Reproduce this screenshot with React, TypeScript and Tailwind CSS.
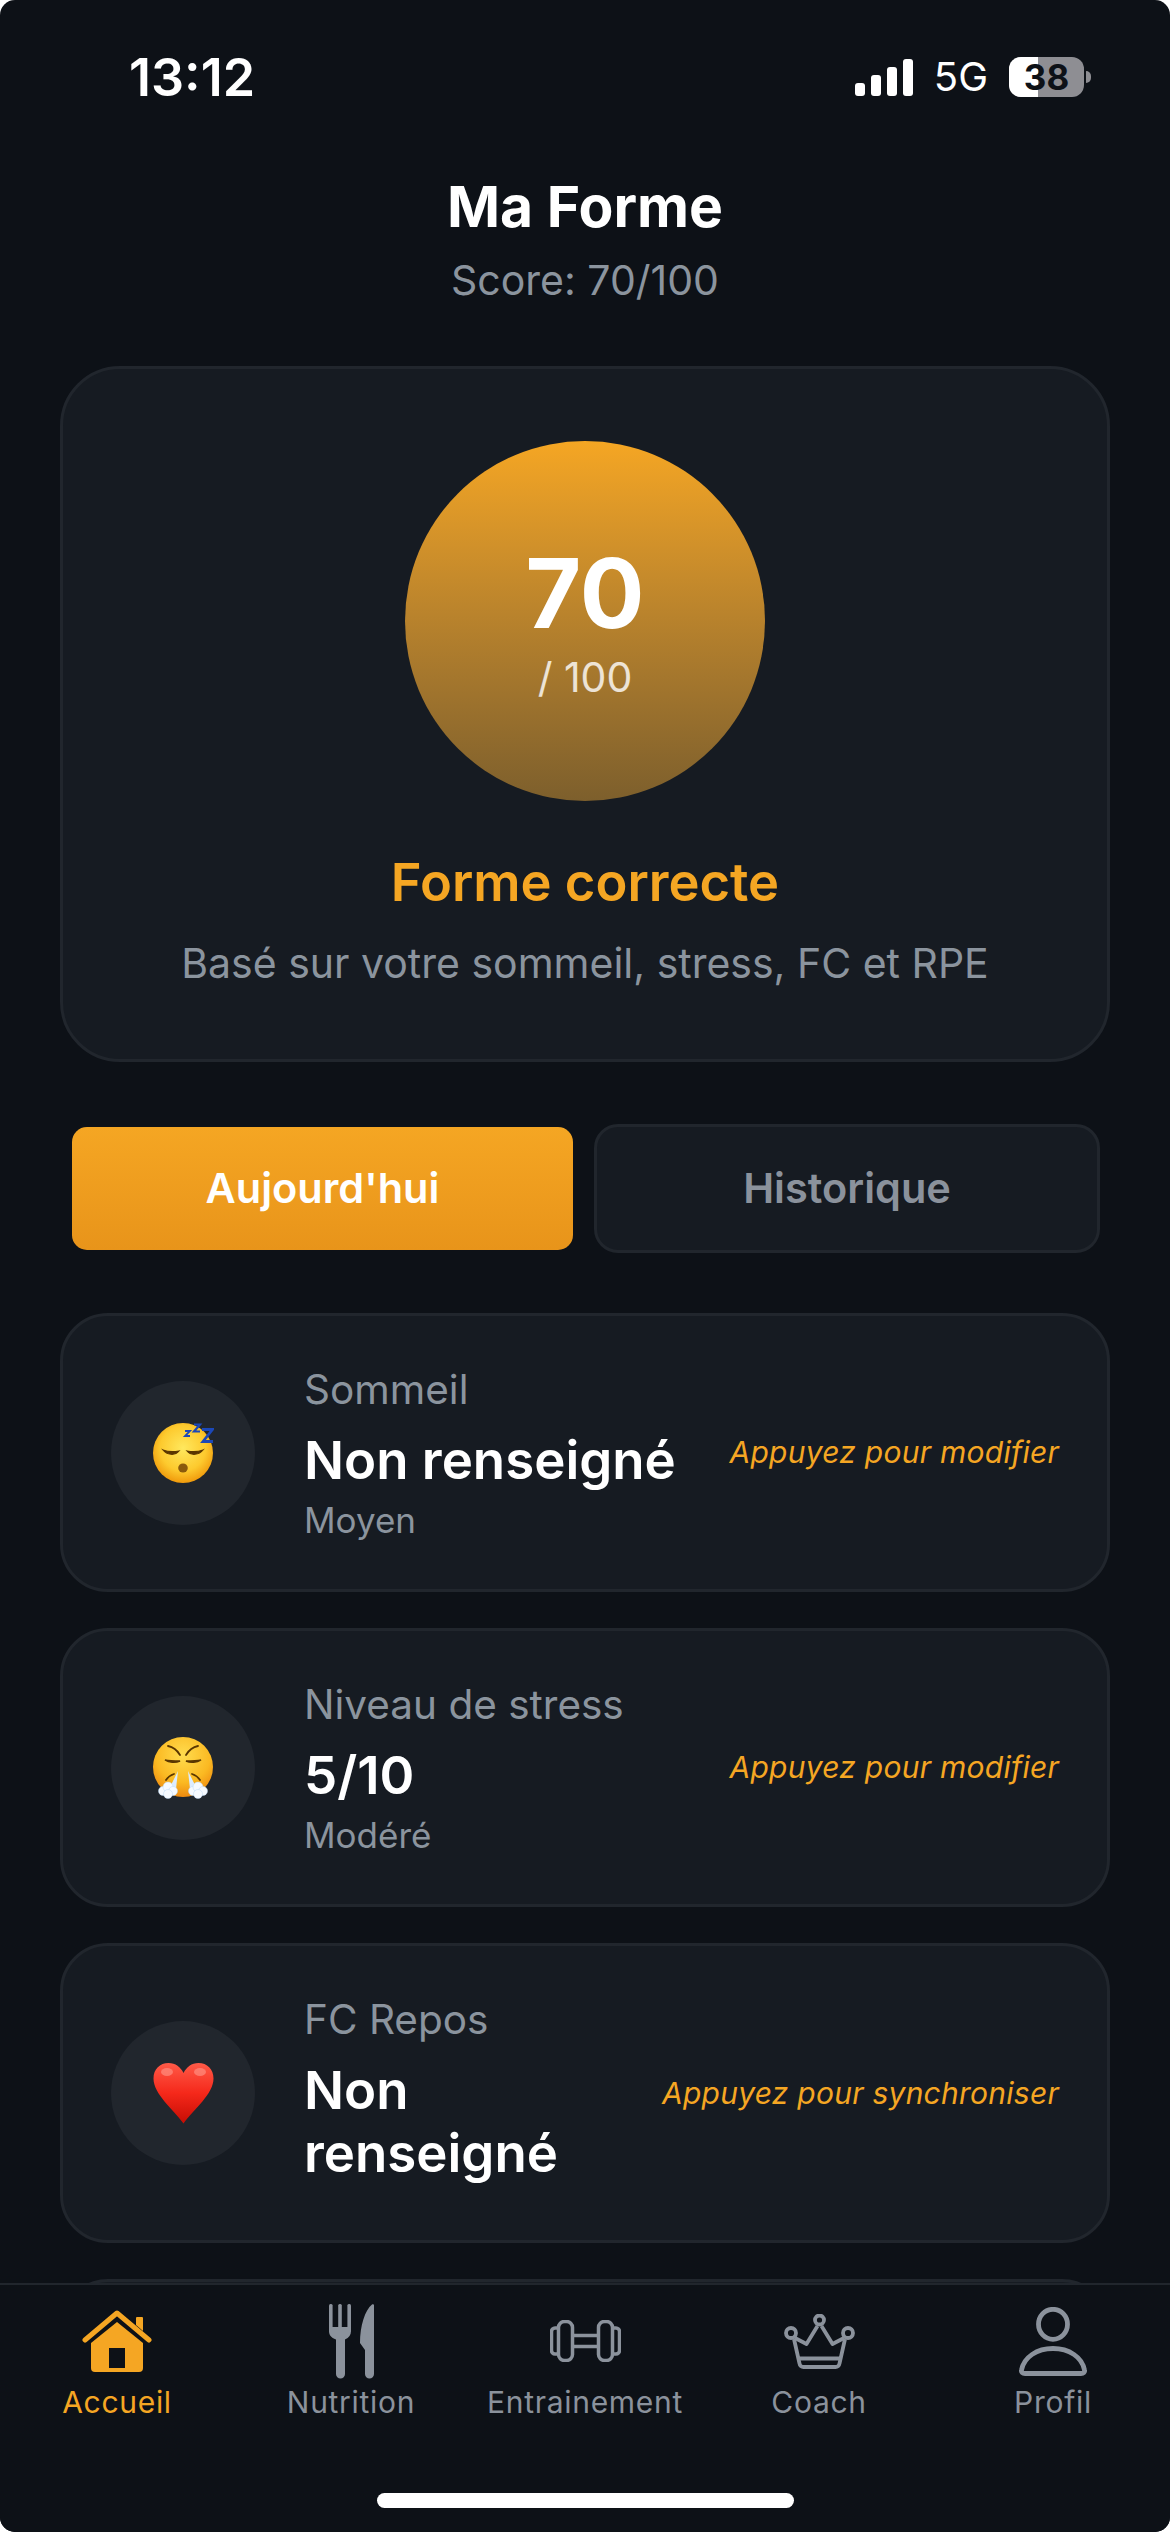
import React from 'react';

const font = { fontFamily: 'Inter, "Liberation Sans", sans-serif' };

function SleepFace() {
  return (
    <svg width="61" height="60" viewBox="0 0 61 60">
      <defs>
        <radialGradient id="sleepFill" cx="50%" cy="42%" r="58%">
          <stop offset="0%" stopColor="#ffe85e" />
          <stop offset="65%" stopColor="#fdca2e" />
          <stop offset="100%" stopColor="#f09a0c" />
        </radialGradient>
      </defs>
      <circle cx="30" cy="30" r="30" fill="url(#sleepFill)" />
      <path d="M10 27c4 5 12 6 16 1-5 1-11 1-16-1z" fill="#5a3600" stroke="#5a3600" strokeWidth="1.200" />
      <path d="M34 28c4 5 12 4 16-1-5 2-11 2-16 1z" fill="#5a3600" stroke="#5a3600" strokeWidth="1.200" />
      <ellipse cx="30" cy="45" rx="4.800" ry="4.500" fill="#8a5a0c" />
      <path d="M32 8h5l-5 5h5" fill="none" stroke="#1c48b8" strokeWidth="1.800" />
      <path d="M41 1.500h6l-6 7h6" fill="none" stroke="#1c48b8" strokeWidth="2.200" />
      <path d="M49 6.500h10.500l-9.500 12h10" fill="none" stroke="#1c48b8" strokeWidth="2.800" />
    </svg>
  );
}

function SteamFace() {
  return (
    <svg width="60" height="62" viewBox="0 0 60 62">
      <defs>
        <radialGradient id="steamFill" cx="50%" cy="30%" r="70%">
          <stop offset="0%" stopColor="#ffdc4e" />
          <stop offset="65%" stopColor="#fbb922" />
          <stop offset="100%" stopColor="#ee8a10" />
        </radialGradient>
      </defs>
      <circle cx="30" cy="30" r="30" fill="url(#steamFill)" />
      <path d="M15 9c5 1 9 4 12 9M45 9c-5 1-9 4-12 9" fill="none" stroke="#5a3600" strokeWidth="1.800" strokeLinecap="round" />
      <path d="M12 23c4 3 11 3 15 1-5 0-10 0-15-1zM33 24c4 2 11 2 15-1-5 1-10 1-15 1z" fill="#5a3600" stroke="#5a3600" strokeWidth="1.400" />
      <path d="M13 43c2-3 5-5 8-6M47 43c-2-3-5-5-8-6" fill="none" stroke="#5a3600" strokeWidth="1.800" strokeLinecap="round" />
      <path d="M25 34l-8 16 6 2zM35 34l8 16-6 2z" fill="#dcecff" />
      <g fill="#f6faff" stroke="#bcd8f5" strokeWidth="0.500">
        <circle cx="10" cy="54" r="4.500" />
        <circle cx="15" cy="50" r="5" />
        <circle cx="20" cy="54" r="4.500" />
        <circle cx="15" cy="57" r="4.500" />
        <circle cx="40" cy="54" r="4.500" />
        <circle cx="45" cy="50" r="5" />
        <circle cx="50" cy="54" r="4.500" />
        <circle cx="45" cy="57" r="4.500" />
      </g>
    </svg>
  );
}

function HeartIcon() {
  return (
    <svg width="61" height="61" viewBox="0 0 61 61">
      <defs>
        <linearGradient id="heartFill" x1="0" y1="0" x2="0" y2="1">
          <stop offset="0%" stopColor="#ff5a48" />
          <stop offset="50%" stopColor="#f5281a" />
          <stop offset="100%" stopColor="#c60d04" />
        </linearGradient>
      </defs>
      <path d="M30.500 60.500C20 46 0.500 31 0.500 15.500 0.500 6 7 0 15.500 0c7 0 12 4 15 10 3-6 8-10 15-10C54 0 60.500 6 60.500 15.500 60.500 31 41 46 30.500 60.500z" fill="url(#heartFill)" />
      <ellipse cx="14" cy="9" rx="6" ry="4" fill="#ff9a8c" opacity="0.6" />
      <ellipse cx="47" cy="9" rx="6" ry="4" fill="#ff9a8c" opacity="0.6" />
    </svg>
  );
}

function HomeIcon() {
  return (
    <svg width="70" height="63" viewBox="0 0 70 63">
      <path d="M9 33L35 12l26 21v25a4 4 0 0 1-4 4H13a4 4 0 0 1-4-4z" fill="#f5a623" />
      <rect x="27" y="38" width="16" height="20" fill="#0d1117" />
      <path d="M3 30L35 3l32 27" fill="none" stroke="#f5a623" strokeWidth="5" strokeLinecap="round" strokeLinejoin="round" />
      <path d="M54 8a1 1 0 0 1 1-1h5a1 1 0 0 1 1 1v13l-7-6z" fill="#f5a623" />
    </svg>
  );
}

function ForkKnifeIcon() {
  return (
    <svg width="45" height="75" viewBox="0 0 45 75" fill="#8b929c">
      <rect x="0" y="0" width="3.600" height="28" rx="1.500" />
      <rect x="9.200" y="0" width="3.600" height="28" rx="1.500" />
      <rect x="18.400" y="0" width="3.600" height="28" rx="1.500" />
      <path d="M0 23h22v4c0 4-2 6.500-6 8.500V70a4.500 4.500 0 0 1-9 0V35.500C2 33.500 0 31 0 27z" />
      <path d="M45 1.500V70a4.500 4.500 0 0 1-9 0V46l-5-7C31 22 36 6 43 0.500 44 -0.200 45 0.300 45 1.500z" />
    </svg>
  );
}

function DumbbellIcon() {
  return (
    <svg width="71" height="42" viewBox="0 0 71 42" fill="none" stroke="#8b929c" strokeWidth="3.500">
      <path d="M8.500 8H5a3.500 3.500 0 0 0-3.500 3.500v19A3.500 3.500 0 0 0 5 34h3.500" />
      <rect x="8.500" y="1.500" width="14" height="39" rx="6" />
      <rect x="48.500" y="1.500" width="14" height="39" rx="6" />
      <path d="M62.500 8H66a3.500 3.500 0 0 1 3.500 3.500v19A3.500 3.500 0 0 1 66 34h-3.500" />
      <path d="M22.500 15.500h26M22.500 26.500h26" />
    </svg>
  );
}

function CrownIcon() {
  return (
    <svg width="71" height="55" viewBox="0 0 71 55" fill="none" stroke="#8b929c" strokeWidth="3.800" strokeLinejoin="round">
      <circle cx="35.500" cy="6" r="4.500" />
      <circle cx="7" cy="19" r="5" />
      <circle cx="64" cy="19" r="5" />
      <path d="M11 24l11.500 6 11-18M60 24l-11.500 6-11-18" />
      <path d="M10 25l5.500 24.500a4 4 0 0 0 4 3.500h32a4 4 0 0 0 4-3.500L61 25" />
      <path d="M14 44.500h43" />
    </svg>
  );
}

function PersonIcon() {
  return (
    <svg width="68" height="69" viewBox="0 0 68 69" fill="none" stroke="#8b929c" strokeWidth="4.800">
      <ellipse cx="34" cy="17.300" rx="14.500" ry="15" />
      <path d="M6 66.500C3.500 66.500 2 65 2.500 63 5 50 18 41.500 34 41.500s29 8.500 31.500 21.500c.5 2-1 3.500-3.500 3.500z" />
    </svg>
  );
}

type Metric = {
  icon: React.ReactNode;
  label: string;
  value: string;
  note?: string;
  hint: string;
  height: string;
};

const metrics: Metric[] = [
  { icon: <SleepFace />, label: 'Sommeil', value: 'Non renseigné', note: 'Moyen', hint: 'Appuyez pour modifier', height: 'h-[279px]' },
  { icon: <SteamFace />, label: 'Niveau de stress', value: '5/10', note: 'Modéré', hint: 'Appuyez pour modifier', height: 'h-[279px]' },
  { icon: <HeartIcon />, label: 'FC Repos', value: 'Non renseigné', hint: 'Appuyez pour synchroniser', height: 'h-[300px]' },
  { icon: null, label: '', value: '', hint: '', height: 'h-[279px]' },
];

function MetricCard({ metric }: { metric: Metric }) {
  return (
    <div className={`${metric.height} shrink-0 flex items-center rounded-[48px] border-[3px] border-[#21262d] bg-[#161b22] px-[48px]`}>
      {metric.icon && (
        <>
          <div className="w-[144px] h-[144px] shrink-0 rounded-full bg-[#21262d] flex items-center justify-center">
            {metric.icon}
          </div>
          <div className={`ml-[49px] flex-1 min-w-0 ${metric.note ? 'pt-[2px]' : 'pb-[9px]'}`}>
            <div className="text-[40.500px] leading-[54px] text-[#8b949e]">{metric.label}</div>
            <div className={`text-[52.800px] leading-[63px] font-semibold text-white ${metric.note ? 'mt-[12px]' : 'mt-[12px]'}`}>{metric.value}</div>
            {metric.note && <div className="text-[35px] leading-[48px] text-[#8b949e] mt-[4px]">{metric.note}</div>}
          </div>
          <div className="shrink-0 text-[30px] italic text-[#f5a623] tracking-[0.25px]">{metric.hint}</div>
        </>
      )}
    </div>
  );
}

type Tab = { label: string; icon: React.ReactNode; active?: boolean };

const tabs: Tab[] = [
  { label: 'Accueil', icon: <HomeIcon />, active: true },
  { label: 'Nutrition', icon: <ForkKnifeIcon /> },
  { label: 'Entrainement', icon: <DumbbellIcon /> },
  { label: 'Coach', icon: <CrownIcon /> },
  { label: 'Profil', icon: <PersonIcon /> },
];

export default function App() {
  return (
    <div className="relative w-[1170px] h-[2532px] overflow-hidden bg-[#0d1117] rounded-[15px] flex flex-col" style={font}>
      {/* status bar */}
      <div className="h-[150px] shrink-0 flex items-start justify-between pl-[129px] pr-[79px] pt-[48px]">
        <span className="text-[52px] leading-[60px] font-semibold text-white">13:12</span>
        <div className="flex items-end mt-[9px] h-[40px]">
          <div className="flex items-end gap-[6px] mb-[1px]">
            <div className="w-[10px] h-[13px] rounded-[3px] bg-white" />
            <div className="w-[10px] h-[21px] rounded-[3px] bg-white" />
            <div className="w-[10px] h-[29px] rounded-[3px] bg-white" />
            <div className="w-[10px] h-[37px] rounded-[3px] bg-white" />
          </div>
          <span className="ml-[21px] text-[40px] leading-[40px] text-white">5G</span>
          <div className="ml-[21px] flex items-center">
            <div className="relative w-[75px] h-[40px] rounded-[12px] overflow-hidden bg-[#8e8e93] flex items-center justify-center">
              <div className="absolute left-0 top-0 bottom-0 w-[29px] bg-white" />
              <span className="relative text-[35px] leading-[36px] font-bold text-[#0d1117]">38</span>
            </div>
            <div className="ml-[2px] w-[5px] h-[12px] rounded-r-full bg-[#8e8e93]" />
          </div>
        </div>
      </div>

      {/* header */}
      <div className="shrink-0 flex flex-col items-center">
        <h1 className="mt-[21px] text-[57px] leading-[72px] font-bold text-white">Ma Forme</h1>
        <p className="mt-[12px] text-[41px] leading-[51px] text-[#8b949e]">Score: 70/100</p>
      </div>

      {/* score card */}
      <div className="mx-[60px] mt-[60px] h-[696px] shrink-0 rounded-[60px] border-[3px] border-[#21262d] bg-[#161b22] flex flex-col items-center pt-[72px]">
        <div className="w-[360px] h-[360px] rounded-full bg-gradient-to-b from-[#f5a623] to-[#7d5f2c] flex flex-col items-center justify-center pt-[2px]">
          <span className="text-[96px] leading-[105px] font-bold text-white">70</span>
          <span className="mt-[6px] text-[41px] leading-[51px] text-white/80">/ 100</span>
        </div>
        <div className="mt-[48px] text-[52.500px] leading-[66px] font-semibold text-[#f5a623]">Forme correcte</div>
        <div className="mt-[21px] text-[41px] leading-[54px] text-[#8b949e]">Basé sur votre sommeil, stress, FC et RPE</div>
      </div>

      {/* tabs */}
      <div className="ml-[72px] mr-[70px] mt-[62px] h-[129px] shrink-0 flex items-center gap-[21px]">
        <div className="w-[501px] h-[123px] rounded-[15px] bg-gradient-to-b from-[#f5a623] to-[#e8941a] flex items-center justify-center text-[41.500px] font-semibold text-white">
          Aujourd'hui
        </div>
        <div className="flex-1 h-[129px] rounded-[24px] border-[3px] border-[#21262d] bg-[#161b22] flex items-center justify-center text-[41.500px] font-semibold text-[#8b929c]">
          Historique
        </div>
      </div>

      {/* metrics */}
      <div className="mx-[60px] mt-[60px] flex flex-col gap-[36px]">
        {metrics.map((metric, i) => (
          <MetricCard key={i} metric={metric} />
        ))}
      </div>

      {/* bottom nav */}
      <div className="absolute left-0 right-0 bottom-0 h-[249px] bg-[#0d1117] border-t-[2px] border-[#21262d]">
        <div className="grid grid-cols-5">
          {tabs.map((tab) => (
            <div key={tab.label} className="flex flex-col items-center">
              <div className="h-[84px] mt-[14px] flex items-center justify-center">{tab.icon}</div>
              <span className={`text-[30px] leading-[36px] tracking-[0.7px] mt-[1px] ${tab.active ? 'text-[#f5a623]' : 'text-[#8b929c]'}`}>
                {tab.label}
              </span>
            </div>
          ))}
        </div>
        <div className="absolute left-[377px] bottom-[24px] w-[417px] h-[15px] rounded-full bg-white" />
      </div>
    </div>
  );
}
